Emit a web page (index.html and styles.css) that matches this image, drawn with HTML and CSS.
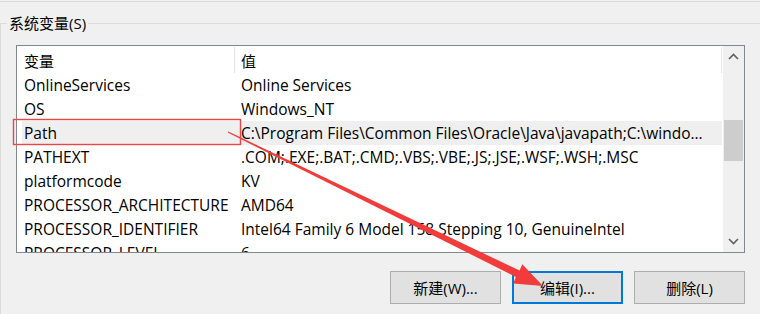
FILE: index.html
```html
<!DOCTYPE html>
<html lang="zh">
<head>
<meta charset="utf-8">
<link rel="stylesheet" href="styles.css">
</head>
<body>
<div class="page">
  <div class="topline"></div>
  <div class="group">
    <div class="group-title">系统变量(S)</div>
    <div class="listbox">
      <div class="table">
        <div class="header">
          <div class="hcell c1">变量</div>
          <div class="hdiv"></div>
          <div class="hcell c2">值</div>
          <div class="hdiv"></div>
        </div>
        <div class="row"><div class="cell c1">OnlineServices</div><div class="cell c2">Online Services</div></div>
        <div class="row"><div class="cell c1">OS</div><div class="cell c2">Windows_NT</div></div>
        <div class="row selected"><div class="cell c1">Path</div><div class="cell c2">C:\Program Files\Common Files\Oracle\Java\javapath;C:\windo...</div></div>
        <div class="row"><div class="cell c1">PATHEXT</div><div class="cell c2">.COM;.EXE;.BAT;.CMD;.VBS;.VBE;.JS;.JSE;.WSF;.WSH;.MSC</div></div>
        <div class="row"><div class="cell c1">platformcode</div><div class="cell c2">KV</div></div>
        <div class="row"><div class="cell c1">PROCESSOR_ARCHITECTURE</div><div class="cell c2">AMD64</div></div>
        <div class="row"><div class="cell c1">PROCESSOR_IDENTIFIER</div><div class="cell c2">Intel64 Family 6 Model 158 Stepping 10, GenuineIntel</div></div>
        <div class="row"><div class="cell c1">PROCESSOR_LEVEL</div><div class="cell c2">6</div></div>
      </div>
      <div class="scrollbar">
        <div class="sb-btn">
          <svg width="11" height="7" viewBox="0 0 11 7"><path d="M1 6 L5.5 1.5 L10 6" fill="none" stroke="#606060" stroke-width="1.6"/></svg>
        </div>
        <div class="sb-track">
          <div class="sb-thumb"></div>
        </div>
        <div class="sb-btn">
          <svg width="11" height="7" viewBox="0 0 11 7"><path d="M1 1 L5.5 5.5 L10 1" fill="none" stroke="#606060" stroke-width="1.6"/></svg>
        </div>
      </div>
    </div>
    <div class="buttons">
      <button class="btn">新建(W)...</button>
      <button class="btn focused">编辑(I)...</button>
      <button class="btn">删除(L)</button>
    </div>
  </div>
  <svg class="annot" width="760" height="314" viewBox="0 0 760 314">
    <rect x="13.5" y="119.5" width="227" height="25" fill="none" stroke="#e8474a" stroke-width="1.4"/>
    <polygon fill="#f23c3c" points="228.3,131.4 519.6,270.6 522.3,264.2 543,286 513.3,283.4 515.9,276.9 227.7,132.6"/>
  </svg>
</div>
</body>
</html>
```

FILE: styles.css
```css
html, body {
  margin: 0;
  padding: 0;
  background: #f0f0f0;
}
.page {
  position: relative;
  width: 760px;
  height: 314px;
  overflow: hidden;
  font-family: "Open Sans", "Noto Sans CJK SC", sans-serif;
  font-size: 15.5px;
  color: #000;
}
.topline {
  margin-top: 1px;
  height: 1px;
  background: #dadada;
}
.group {
  position: relative;
  margin-top: 21px;
  border-top: 1px solid #dcdcdc;
  border-left: 1px solid #dcdcdc;
  padding: 21px 0 0 15px;
  height: 300px;
}
.group-title {
  position: absolute;
  top: -11px;
  left: 6px;
  padding: 0 2px;
  background: #f0f0f0;
  line-height: 20px;
  font-size: 15px;
}
.listbox {
  width: 727px;
  height: 206px;
  border: 1px solid #828790;
  background: #fff;
  display: flex;
}
.table {
  flex: 1;
  overflow: hidden;
  white-space: nowrap;
}
.header {
  display: flex;
  height: 27px;
  align-items: stretch;
  font-size: 15px;
}
.hcell {
  display: flex;
  align-items: center;
  padding-top: 1px;
}
.hcell.c1 {
  width: 210px;
  padding-left: 7px;
}
.hcell.c2 {
  width: 480px;
  padding-left: 6px;
}
.hdiv {
  width: 1px;
  background: #e5e5e5;
  margin-top: 1px;
}
.row {
  display: flex;
  height: 24px;
  align-items: center;
  margin-left: 5px;
}
.row.selected {
  background: #efefef;
}
.cell.c1 {
  width: 212px;
  padding-left: 2px;
  flex: none;
}
.cell.c2 {
  flex: 1;
  padding-left: 5px;
  overflow: hidden;
}
.scrollbar {
  width: 21px;
  background: #f0f0f0;
  display: flex;
  flex-direction: column;
  margin-left: 1px;
}
.sb-btn {
  height: 21px;
  display: flex;
  align-items: center;
  justify-content: center;
}
.sb-track {
  flex: 1;
  padding-top: 53px;
}
.sb-thumb {
  margin: 0 1px 0 1px;
  height: 41px;
  background: #cdcdcd;
}
.buttons {
  display: flex;
  justify-content: flex-end;
  gap: 11px;
  width: 729px;
  margin-top: 18px;
}
.btn {
  width: 111px;
  height: 33px;
  box-sizing: border-box;
  background: #e1e1e1;
  border: 1px solid #adadad;
  font-family: "Open Sans", "Noto Sans CJK SC", sans-serif;
  font-size: 15px;
  color: #000;
  padding: 0;
  margin: 0;
}
.btn.focused {
  border: 2px solid #0078d7;
}
.annot {
  position: absolute;
  top: 0;
  left: 0;
  pointer-events: none;
}
```
